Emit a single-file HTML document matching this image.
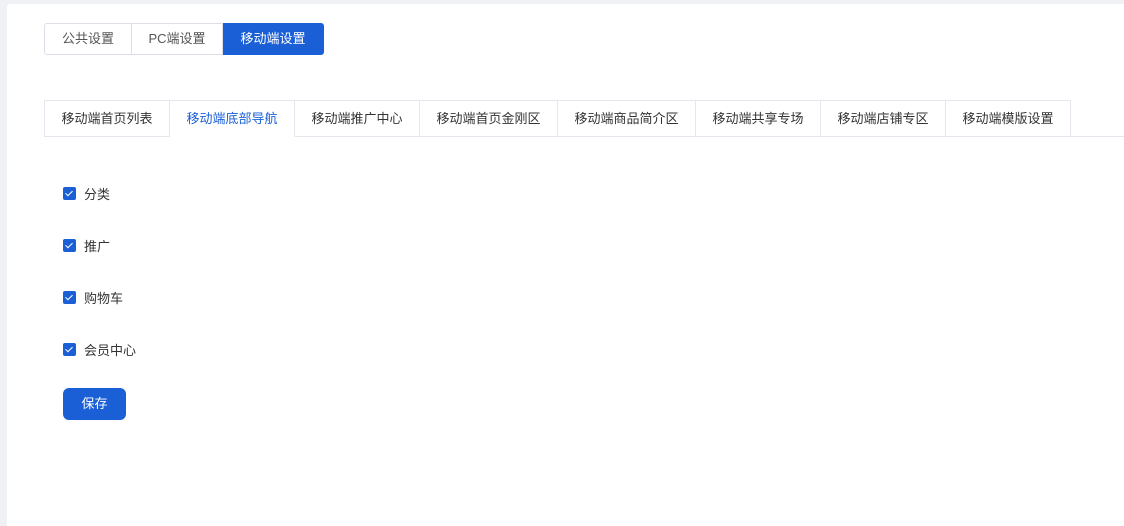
<!DOCTYPE html>
<html><head><meta charset="utf-8"><style>
*{box-sizing:border-box;margin:0;padding:0}
body{width:1124px;height:526px;background:#f0f1f5;font-family:"Liberation Sans","Noto Sans CJK SC",sans-serif;font-size:13px;color:#333;position:relative;overflow:hidden}
.panel{position:absolute;left:7px;top:4px;right:0;bottom:0;background:#fff;border-radius:3px 0 0 0}
.seg{position:absolute;left:44px;top:23px;height:32px;display:flex}
.seg div{height:32px;line-height:30px;border:1px solid #dcdfe6;text-align:center;color:#555;background:#fff}
.seg div+div{border-left:none}
.seg .a{background:#1a5fd6;color:#fff;border-color:#1a5fd6;border-radius:0 3px 3px 0}
.seg .f{border-radius:3px 0 0 3px}
.tabs{position:absolute;left:44px;top:100px;right:0;height:37px;border-bottom:1px solid #e4e7ed;display:flex}
.tabs div{height:37px;line-height:35px;border:1px solid #e4e7ed;border-left:none;text-align:center;color:#333;background:#fff}
.tabs div:first-child{border-left:1px solid #e4e7ed}
.tabs .a{color:#1a5fd6;border-bottom-color:#fff}
.cb{position:absolute;left:63px;display:flex;align-items:center}
.cb i{width:13px;height:13px;background:#1a5fd6;border-radius:2px;display:inline-block;position:relative;margin-right:8px}
.cb i:after{content:"";position:absolute;left:4px;top:2px;width:3px;height:6px;border:solid #fff;border-width:0 1.5px 1.5px 0;transform:rotate(45deg)}
.btn{position:absolute;left:63px;top:388px;width:63px;height:32px;background:#1a5fd6;color:#fff;border-radius:6px;text-align:center;line-height:32px}
</style></head><body>
<div class="panel"></div>
<div class="seg"><div class="f" style="width:88px">公共设置</div><div style="width:91px">PC端设置</div><div class="a" style="width:101px">移动端设置</div></div>
<div class="tabs"><div style="width:126px">移动端首页列表</div><div class="a" style="width:125px">移动端底部导航</div><div style="width:125px">移动端推广中心</div><div style="width:138px">移动端首页金刚区</div><div style="width:138px">移动端商品简介区</div><div style="width:125px">移动端共享专场</div><div style="width:125px">移动端店铺专区</div><div style="width:125px">移动端模版设置</div></div>
<div class="cb" style="top:184px"><i></i>分类</div>
<div class="cb" style="top:236px"><i></i>推广</div>
<div class="cb" style="top:288px"><i></i>购物车</div>
<div class="cb" style="top:340px"><i></i>会员中心</div>
<div class="btn">保存</div>
</body></html>
